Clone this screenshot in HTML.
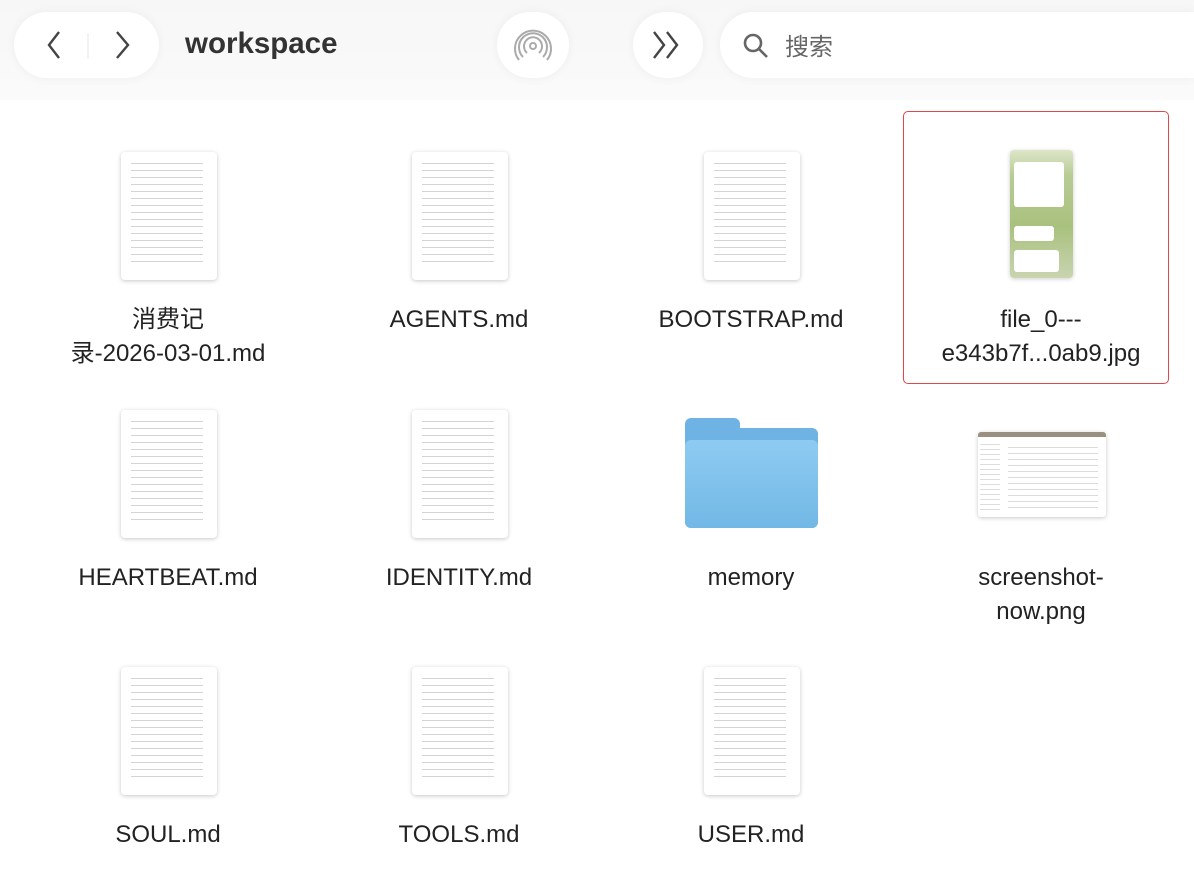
<!DOCTYPE html><html><head><meta charset="utf-8"><style>
body{margin:0;width:1194px;height:884px;background:#fff;font-family:"Liberation Sans","Noto Sans CJK SC",sans-serif;position:relative;overflow:hidden}
.bar{position:absolute;top:0;left:0;width:1194px;height:100px;background:linear-gradient(#f7f7f7,#fafafa)}
.pill{position:absolute;background:#fff;border-radius:34px;box-shadow:0 0 10px rgba(0,0,0,.05)}
.doc{position:absolute;width:96px;height:128px;background:#fff;border-radius:4px;box-shadow:0 1px 4px rgba(0,0,0,.22);overflow:hidden}
.doc:before{content:"";position:absolute;left:10px;right:14px;top:8px;bottom:12px;background:repeating-linear-gradient(#fff 0,#fff 3px,#d4d4d4 3px,#d4d4d4 4px,#fff 4px,#fff 7px)}
.lbl{position:absolute;width:260px;text-align:center;font-size:24px;color:#222;line-height:34px}
</style></head><body>
<div class="bar"></div>
<div class="pill" style="left:14px;top:12px;width:145px;height:66px"></div>
<svg style="position:absolute;left:40px;top:28px" width="100" height="34"><path d="M19 4 L9 17 L19 30" stroke="#444" stroke-width="2.4" fill="none"/><line x1="48" y1="5" x2="48" y2="31" stroke="#e6e6e6"/><path d="M77 4 L88 17 L77 30" stroke="#444" stroke-width="2.4" fill="none"/></svg>
<div style="position:absolute;left:185px;top:27px;font-size:29.5px;font-weight:bold;color:#333">workspace</div>
<div class="pill" style="left:497px;top:12px;width:72px;height:66px"></div>
<svg style="position:absolute;left:513px;top:26px" width="40" height="40" fill="none" stroke="#aaa" stroke-width="2"><circle cx="20" cy="20" r="3"/><path d="M14 27a9 9 0 1 1 12 0M10 31a14 14 0 1 1 20 0M6 34a18 18 0 1 1 28 0"/></svg>
<div class="pill" style="left:633px;top:12px;width:70px;height:66px"></div>
<svg style="position:absolute;left:650px;top:29px" width="36" height="32" fill="none" stroke="#444" stroke-width="2.4"><path d="M4 3 L14 16 L4 29M17 3 L27 16 L17 29"/></svg>
<div class="pill" style="left:720px;top:12px;width:474px;height:66px;border-radius:34px 0 0 34px"></div>
<svg style="position:absolute;left:742px;top:32px" width="28" height="28" fill="none" stroke="#666" stroke-width="2.6"><circle cx="11" cy="11" r="8"/><path d="M17 17 L25 25"/></svg>
<div style="position:absolute;left:785px;top:27px;font-size:24px;color:#666">搜索</div>

<div class="doc" style="left:121px;top:152px"></div>
<div class="doc" style="left:412px;top:152px"></div>
<div class="doc" style="left:704px;top:152px"></div>
<div style="position:absolute;left:903px;top:111px;width:264px;height:271px;border:1.5px solid #e0474b;border-radius:5px"></div>
<div style="position:absolute;left:1010px;top:150px;width:63px;height:128px;border-radius:4px;background:linear-gradient(#dde6c9,#b8cc94 20%,#a9c17e 60%,#c9d4b0);box-shadow:0 1px 4px rgba(0,0,0,.2)">
<div style="position:absolute;left:4px;top:12px;width:50px;height:45px;background:#fff;border-radius:3px"></div>
<div style="position:absolute;left:4px;top:76px;width:40px;height:15px;background:#fff;border-radius:3px"></div>
<div style="position:absolute;left:4px;top:100px;width:45px;height:22px;background:#fff;border-radius:3px"></div></div>
<div class="lbl" style="left:38px;top:303px">消费记<br>录-2026-03-01.md</div>
<div class="lbl" style="left:329px;top:303px">AGENTS.md</div>
<div class="lbl" style="left:621px;top:303px">BOOTSTRAP.md</div>
<div class="lbl" style="left:911px;top:303px">file_0---<br>e343b7f...0ab9.jpg</div>

<div class="doc" style="left:121px;top:410px"></div>
<div class="doc" style="left:412px;top:410px"></div>
<div style="position:absolute;left:685px;top:418px;width:133px;height:110px">
<div style="position:absolute;left:0;top:0;width:55px;height:20px;background:#6fb3e4;border-radius:6px 6px 0 0"></div>
<div style="position:absolute;left:0;top:10px;width:133px;height:100px;background:#6fb3e4;border-radius:6px"></div>
<div style="position:absolute;left:0;top:22px;width:133px;height:88px;background:linear-gradient(#8ecbf2,#72b8e6);border-radius:6px"></div></div>
<div style="position:absolute;left:978px;top:432px;width:128px;height:85px;background:#fff;box-shadow:0 1px 4px rgba(0,0,0,.22);border-radius:3px;overflow:hidden">
<div style="height:5px;background:#9a9080"></div><div style="position:absolute;left:2px;top:8px;width:20px;height:70px;background:repeating-linear-gradient(#fff 0,#fff 4px,#ddd 4px,#ddd 5px)"></div>
<div style="position:absolute;left:30px;top:10px;width:90px;height:70px;background:repeating-linear-gradient(#fff 0,#fff 5px,#ccc 5px,#ccc 6px);opacity:.7"></div></div>
<div class="lbl" style="left:38px;top:561px">HEARTBEAT.md</div>
<div class="lbl" style="left:329px;top:561px">IDENTITY.md</div>
<div class="lbl" style="left:621px;top:561px">memory</div>
<div class="lbl" style="left:911px;top:561px">screenshot-<br>now.png</div>

<div class="doc" style="left:121px;top:667px"></div>
<div class="doc" style="left:412px;top:667px"></div>
<div class="doc" style="left:704px;top:667px"></div>
<div class="lbl" style="left:38px;top:818px">SOUL.md</div>
<div class="lbl" style="left:329px;top:818px">TOOLS.md</div>
<div class="lbl" style="left:621px;top:818px">USER.md</div>
</body></html>
